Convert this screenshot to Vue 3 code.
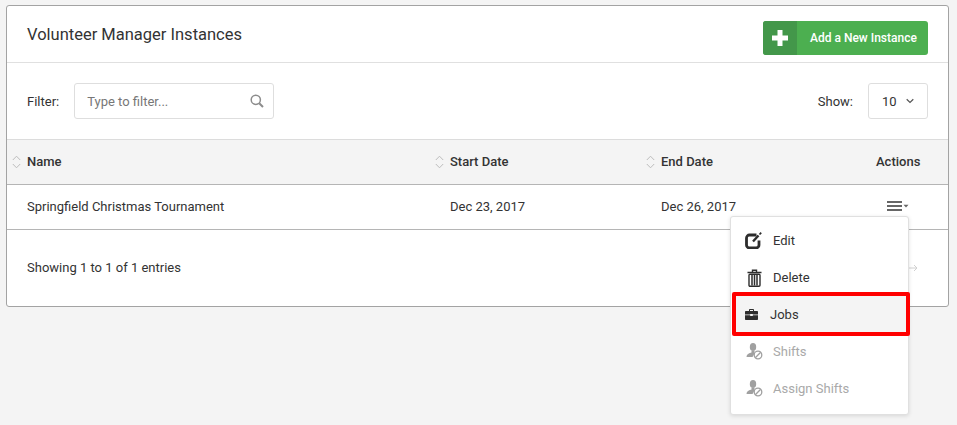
<template>
  <div class="page">
    <section class="card">
      <header class="card-head">
        <h2 class="card-title">Volunteer Manager Instances</h2>
        <button class="add-btn">
          <span class="add-icon">
            <svg width="16" height="16" viewBox="0 0 16 16" fill="#fff">
              <path d="M5.500 0h5v5.500H16v5h-5.500V16h-5v-5.500H0v-5h5.500z"></path>
            </svg>
          </span>
          <span class="add-label">Add a New Instance</span>
        </button>
      </header>

      <div class="toolbar">
        <label class="filter">
          <span class="tool-label">Filter:</span>
          <span class="filter-box">
            <span class="placeholder">Type to filter...</span>
            <svg width="14" height="14" viewBox="0 0 14 14" fill="none" stroke="#8c8c8c">
              <circle cx="5.800" cy="5.800" r="4.600" stroke-width="1.500"></circle>
              <path d="M9.200 9.200l3.800 3.800" stroke-width="2"></path>
            </svg>
          </span>
        </label>
        <div class="show">
          <span class="tool-label">Show:</span>
          <span class="show-box">
            10
            <svg width="8" height="6" viewBox="0 0 8 6" fill="none" stroke="#555" stroke-width="1.200">
              <path d="M.7 1.300L4 4.500l3.300-3.200"></path>
            </svg>
          </span>
        </div>
      </div>

      <div class="row head-row">
        <div v-for="col in columns" :key="col.label" class="cell" :class="col.cls">
          <svg class="sort" width="9" height="14" viewBox="0 0 9 14" fill="none" stroke="#bcbcbc">
            <path d="M.8 5L4.500 1.200 8.200 5M.8 9l3.700 3.800L8.200 9"></path>
          </svg>
          {{ col.label }}
        </div>
        <div class="cell col-actions">Actions</div>
      </div>

      <div class="row body-row">
        <div class="cell col-name">Springfield Christmas Tournament</div>
        <div class="cell col-start">Dec 23, 2017</div>
        <div class="cell col-end">Dec 26, 2017</div>
        <div class="cell col-actions">
          <span class="menu-toggle">
            <svg width="23" height="11" viewBox="0 0 23 11" fill="#666">
              <rect x="0" y="0" width="15" height="2"></rect>
              <rect x="0" y="4" width="15" height="2"></rect>
              <rect x="0" y="8" width="15" height="2"></rect>
              <path d="M16.500 3.800h5l-2.500 2.800z"></path>
            </svg>
          </span>
        </div>
      </div>

      <footer class="card-foot">
        <span>Showing 1 to 1 of 1 entries</span>
        <svg class="next" width="11" height="8" viewBox="0 0 11 8" fill="none" stroke="#d0d0d0">
          <path d="M0 4h10M7 1l3 3-3 3"></path>
        </svg>
      </footer>

      <ul class="menu">
        <li class="menu-item">
          <span class="menu-icon">
            <svg width="18" height="17" viewBox="0 0 18 17" fill="none" stroke="#2d2d2d">
              <path d="M11.500 3H4.500A3 3 0 0 0 1.500 6v7a3 3 0 0 0 3 3h6.500a3 3 0 0 0 3-3V8.500" stroke-width="2.800"></path>
              <path d="M8 9.500l5.500-6" stroke-width="2.400"></path>
              <path d="M14.500 2.500l1.700-1.800" stroke-width="1.800"></path>
            </svg>
          </span>
          Edit
        </li>
        <li class="menu-item">
          <span class="menu-icon">
            <svg width="15" height="18" viewBox="0 0 15 18" fill="none" stroke="#2d2d2d">
              <path d="M.5 3.500h14M5.500 3V1.200h4V3" stroke-width="1.400"></path>
              <rect x="2" y="5.200" width="11" height="12" rx="1" stroke-width="1.400"></rect>
              <path d="M5 6v10.500M7.500 6v10.500M10 6v10.500" stroke-width="1.500"></path>
            </svg>
          </span>
          Delete
        </li>
        <li class="menu-item jobs">
          <span class="jobs-icon">
            <svg width="13" height="11" viewBox="0 0 13 11" fill="#2d2d2d">
              <path d="M4 2V.8C4 .4 4.400 0 4.800 0h3.400C8.600 0 9 .4 9 .8V2h3c.6 0 1 .4 1 1v2.500H7.800V5H5.200v.5H0V3c0-.6.4-1 1-1zm1 0h3V1H5z"></path>
              <path d="M0 6.300h5.200V7h2.600v-.7H13V10c0 .6-.4 1-1 1H1c-.6 0-1-.4-1-1z"></path>
            </svg>
          </span>
          Jobs
        </li>
        <li v-for="label in disabledItems" :key="label" class="menu-item disabled">
          <span class="menu-icon">
            <svg width="17" height="17" viewBox="0 0 17 17">
              <ellipse cx="7" cy="4" rx="3.200" ry="4" fill="#a0a0a0"></ellipse>
              <path d="M5.500 8h3v2.500L6.500 14H.5c0-2.500 1.500-3.500 5-4.500z" fill="#a0a0a0"></path>
              <circle cx="12" cy="12" r="3.800" fill="#fff" stroke="#a0a0a0" stroke-width="1.300"></circle>
              <path d="M9.300 14.700l5.400-5.400" stroke="#a0a0a0" stroke-width="1.300"></path>
            </svg>
          </span>
          {{ label }}
        </li>
      </ul>
    </section>
  </div>
</template>

<script setup>
const columns = [
  { label: 'Name', cls: 'col-name' },
  { label: 'Start Date', cls: 'col-start' },
  { label: 'End Date', cls: 'col-end' }
]

const disabledItems = ['Shifts', 'Assign Shifts']
</script>

<style>
html,
body {
  margin: 0;
  background: #f4f4f4;
}
</style>

<style scoped>
.page {
  height: 425px;
  box-sizing: border-box;
  padding: 5px 8px 0 6px;
  overflow: hidden;
  font-family: Roboto, "Liberation Sans", sans-serif;
  font-size: 13px;
  color: #333;
}

.card {
  position: relative;
  height: 302px;
  box-sizing: border-box;
  background: #fff;
  border: 1px solid #a3a3a3;
  border-radius: 3px;
}

.card-head {
  display: flex;
  align-items: center;
  justify-content: space-between;
  height: 57px;
  box-sizing: border-box;
  padding: 0 20px;
  border-bottom: 1px solid #e0e0e0;
}

.card-title {
  margin: 0;
  font-size: 16.500px;
  font-weight: 400;
  color: #333;
}

.add-btn {
  display: flex;
  align-items: stretch;
  width: 165px;
  height: 34px;
  margin-top: 8px;
  padding: 0;
  border: none;
  border-radius: 3px;
  overflow: hidden;
  background: #4caf50;
  color: #fff;
  font: 500 12px Roboto, sans-serif;
}

.add-icon {
  display: flex;
  align-items: center;
  justify-content: center;
  width: 34px;
  background: #43974a;
}

.add-label {
  flex: 1;
  align-self: center;
  padding-left: 13px;
  text-align: left;
}

.toolbar {
  display: flex;
  align-items: center;
  justify-content: space-between;
  height: 77px;
  box-sizing: border-box;
  padding: 0 20px;
  border-bottom: 1px solid #dcdcdc;
}

.filter,
.show {
  display: flex;
  align-items: center;
}

.tool-label {
  margin-right: 15px;
}

.filter-box {
  display: flex;
  align-items: center;
  justify-content: space-between;
  width: 200px;
  height: 36px;
  box-sizing: border-box;
  padding: 0 9px 0 12px;
  border: 1px solid #dedede;
  border-radius: 3px;
}

.placeholder {
  color: #777;
}

.show-box {
  display: flex;
  align-items: center;
  justify-content: space-between;
  width: 60px;
  height: 36px;
  box-sizing: border-box;
  padding: 0 13px;
  border: 1px solid #dedede;
  border-radius: 3px;
}

.row {
  display: flex;
  align-items: center;
  height: 45px;
  box-sizing: border-box;
  border-bottom: 1px solid #b5b5b5;
}

.head-row {
  padding-bottom: 2px;
  background: #f4f4f4;
  font-weight: 500;
}

.body-row {
  padding-bottom: 2px;
}

.cell {
  position: relative;
  box-sizing: border-box;
}

.col-name {
  width: 423px;
  padding-left: 20px;
}

.col-start {
  width: 211px;
  padding-left: 20px;
}

.col-end {
  width: 214px;
  padding-left: 20px;
}

.col-actions {
  flex: 1;
  padding-left: 21px;
}

.sort {
  position: absolute;
  left: 5px;
  top: 1px;
}

.menu-toggle {
  display: block;
  padding-left: 11px;
  height: 11px;
}

.menu-toggle svg {
  display: block;
}

.card-foot {
  display: flex;
  align-items: center;
  justify-content: space-between;
  height: 75px;
  padding: 0 30px 0 20px;
}

.menu {
  position: absolute;
  left: 723px;
  top: 210px;
  width: 179px;
  height: 199px;
  box-sizing: border-box;
  margin: 0;
  padding: 5px 0 0;
  list-style: none;
  background: #fff;
  border: 1px solid #e0e0e0;
  border-radius: 3px;
  box-shadow: 0 1px 4px rgba(0, 0, 0, 0.12);
}

.menu-item {
  display: flex;
  align-items: center;
  height: 37px;
  padding-left: 14px;
  color: #333;
}

.menu-icon {
  display: flex;
  justify-content: center;
  width: 18px;
  margin-right: 10px;
}

.jobs {
  box-sizing: border-box;
  height: 44px;
  margin: -4px -2px -3px 1px;
  padding-left: 9px;
  background: #f4f4f4;
  border: 4px solid #f00;
  border-radius: 2px;
}

.jobs-icon {
  display: flex;
  margin-right: 12px;
}

.disabled {
  color: #a9a9a9;
}
</style>
